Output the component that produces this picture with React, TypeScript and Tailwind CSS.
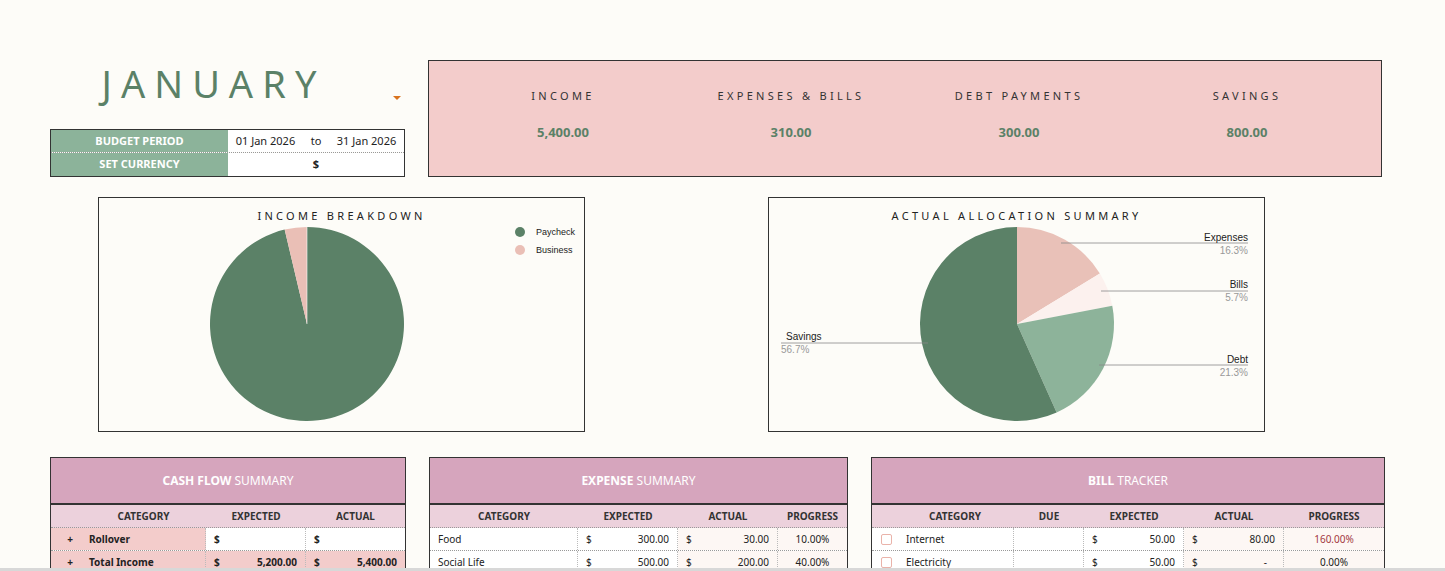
import React from 'react';

const GREEN = '#5b8167';
const PINK = '#eabfb6';

function slicePath(cx: number, cy: number, r: number, a0: number, a1: number) {
  const p = (a: number) => [cx + r * Math.sin(a * 2 * Math.PI), cy - r * Math.cos(a * 2 * Math.PI)];
  const [x0, y0] = p(a0);
  const [x1, y1] = p(a1);
  const large = a1 - a0 > 0.5 ? 1 : 0;
  return `M${cx},${cy} L${x0},${y0} A${r},${r} 0 ${large} 1 ${x1},${y1} Z`;
}

const summary = [
  { label: 'INCOME', value: '5,400.00' },
  { label: 'EXPENSES & BILLS', value: '310.00' },
  { label: 'DEBT PAYMENTS', value: '300.00' },
  { label: 'SAVINGS', value: '800.00' },
];

const alloc = [
  { v: 0.163, c: '#e9c1b8' },
  { v: 0.057, c: '#fcf1ee' },
  { v: 0.213, c: '#8db39a' },
  { v: 0.567, c: GREEN },
];

const th = 'text-[10px] font-bold text-[#333] text-center';
const cell = 'border-r border-dotted border-[#bbb] h-full flex items-center px-2';

function IncomeChart() {
  return (
    <div className="w-[487px] h-[235px] border border-[#333] bg-[#fdfcf8] relative shrink-0">
      <div className="text-center text-[11px] tracking-[0.3em] mt-[10px] font-['Liberation_Sans',sans-serif] text-[#222]">INCOME BREAKDOWN</div>
      <svg width="487" height="235" className="absolute inset-0">
        <path d={slicePath(208, 126, 97, 0, 0.963)} fill={GREEN} />
        <path d={slicePath(208, 126, 97, 0.963, 1)} fill={PINK} />
        <line x1="208" y1="29" x2="208" y2="126" stroke="#fff" strokeWidth="0.6" />
        <circle cx="421" cy="34" r="5" fill={GREEN} />
        <circle cx="421" cy="52" r="5" fill={PINK} />
        <text x="437" y="37" fontSize="9" fontFamily="Liberation Sans, sans-serif" fill="#222">Paycheck</text>
        <text x="437" y="55" fontSize="9" fontFamily="Liberation Sans, sans-serif" fill="#222">Business</text>
      </svg>
    </div>
  );
}

function AllocChart() {
  let acc = 0;
  const cx = 248, cy = 126;
  return (
    <div className="w-[497px] h-[235px] border border-[#333] bg-[#fdfcf8] relative shrink-0">
      <div className="text-center text-[11px] tracking-[0.3em] mt-[10px] font-['Liberation_Sans',sans-serif] text-[#222]">ACTUAL ALLOCATION SUMMARY</div>
      <svg width="497" height="235" className="absolute inset-0" fontFamily="Liberation Sans, sans-serif">
        {alloc.map((s, i) => {
          const d = slicePath(cx, cy, 97, acc, acc + s.v);
          acc += s.v;
          return <path key={i} d={d} fill={s.c} />;
        })}
        <g stroke="#888" strokeWidth="0.8">
          <line x1="292" y1="45" x2="479" y2="45" />
          <line x1="332" y1="93" x2="479" y2="93" />
          <line x1="330" y1="167" x2="479" y2="167" />
          <line x1="12" y1="145" x2="159" y2="145" />
        </g>
        <g fontSize="10">
          <text x="479" y="43" textAnchor="end" fill="#222">Expenses</text>
          <text x="479" y="56" textAnchor="end" fill="#999">16.3%</text>
          <text x="479" y="90" textAnchor="end" fill="#222">Bills</text>
          <text x="479" y="103" textAnchor="end" fill="#999">5.7%</text>
          <text x="479" y="165" textAnchor="end" fill="#222">Debt</text>
          <text x="479" y="178" textAnchor="end" fill="#999">21.3%</text>
          <text x="17" y="142" fill="#222">Savings</text>
          <text x="12" y="155" fill="#999">56.7%</text>
        </g>
      </svg>
    </div>
  );
}

function TableHead({ title, sub }: { title: React.ReactNode; sub: React.ReactNode }) {
  return (
    <>
      <div className="h-[47px] bg-[#d6a5bd] border-b-2 border-[#333] flex items-center justify-center text-white text-[12px]">{title}</div>
      <div className="h-[23px] bg-[#ecd1dc] flex items-center border-b border-dotted border-[#999]">{sub}</div>
    </>
  );
}

export default function App() {
  return (
    <div className="w-[1445px] h-[571px] bg-[#fdfcf8] overflow-hidden font-['Lato',sans-serif] relative">
      {/* top */}
      <div className="flex pt-[60px]">
        <div className="ml-[50px] w-[355px]">
          <div className="relative h-[69px]">
            <div className="text-center pr-[28px] pt-[1px] text-[38px] tracking-[0.24em] text-[#5b8167] font-['DejaVu_Serif',serif] leading-[44px]">JANUARY</div>
            <div className="absolute left-[343px] top-[36px] w-0 h-0 border-l-[4px] border-r-[4px] border-t-[4px] border-l-transparent border-r-transparent border-t-[#d9731e]" />
          </div>
          <div className="border border-[#333] text-[11px]">
            <div className="flex h-[23px] border-b border-dotted border-[#999]">
              <div className="w-[177px] bg-[#8cb39a] text-white font-bold flex items-center justify-center">BUDGET PERIOD</div>
              <div className="flex-1 bg-white flex items-center justify-around text-[#222]"><span>01 Jan 2026</span><span>to</span><span>31 Jan 2026</span></div>
            </div>
            <div className="flex h-[23px]">
              <div className="w-[177px] bg-[#8cb39a] text-white font-bold flex items-center justify-center">SET CURRENCY</div>
              <div className="flex-1 bg-white flex items-center justify-center font-bold text-[#222]">$</div>
            </div>
          </div>
        </div>
        <div className="ml-[23px] w-[954px] h-[117px] bg-[#f3cccb] border border-[#333] flex pt-[27px] pl-[20px] pr-[20px]">
          {summary.map((s) => (
            <div key={s.label} className="flex-1 text-center">
              <div className="text-[11px] tracking-[0.3em] text-[#333] font-['Liberation_Sans',sans-serif]">{s.label}</div>
              <div className="mt-[18px] text-[13px] font-bold text-[#5b8167]">{s.value}</div>
            </div>
          ))}
        </div>
      </div>

      {/* charts */}
      <div className="flex mt-[20px] ml-[98px] gap-[183px]">
        <IncomeChart />
        <AllocChart />
      </div>

      {/* tables */}
      <div className="flex mt-[25px] ml-[50px] gap-[23px] items-start">
        <div className="w-[356px] border border-[#333] border-b-0">
          <TableHead
            title={<span><b>CASH FLOW</b> SUMMARY</span>}
            sub={<>
              <div className={`${th} w-[155px] pl-[30px]`}>CATEGORY</div>
              <div className={`${th} w-[100px]`}>EXPECTED</div>
              <div className={`${th} flex-1`}>ACTUAL</div>
            </>}
          />
          {[['Rollover', '', ''], ['Total Income', '5,200.00', '5,400.00']].map((r, i) => (
            <div key={i} className="flex h-[23px] text-[10px] text-[#222] border-b border-dotted border-[#999]">
              <div className="w-[155px] bg-[#f3cccb] flex items-center font-bold border-r border-dotted border-[#bbb]">
                <span className="w-[38px] text-center">+</span>{r[0]}
              </div>
              <div className={`${cell} w-[100px] justify-between font-bold ${i ? 'bg-[#f3cccb]' : 'bg-white'}`}><span>$</span><span>{r[1]}</span></div>
              <div className={`flex-1 h-full flex items-center px-2 justify-between font-bold ${i ? 'bg-[#f3cccb]' : 'bg-white'}`}><span>$</span><span>{r[2]}</span></div>
            </div>
          ))}
        </div>

        <div className="w-[419px] border border-[#333] border-b-0">
          <TableHead
            title={<span><b>EXPENSE</b> SUMMARY</span>}
            sub={<>
              <div className={`${th} w-[148px]`}>CATEGORY</div>
              <div className={`${th} w-[100px]`}>EXPECTED</div>
              <div className={`${th} w-[100px]`}>ACTUAL</div>
              <div className={`${th} flex-1`}>PROGRESS</div>
            </>}
          />
          {[['Food', '300.00', '30.00', '10.00%'], ['Social Life', '500.00', '200.00', '40.00%']].map((r) => (
            <div key={r[0]} className="flex h-[23px] text-[10px] text-[#222] bg-white border-b border-dotted border-[#999]">
              <div className={`${cell} w-[148px]`}>{r[0]}</div>
              <div className={`${cell} w-[100px] justify-between`}><span>$</span><span>{r[1]}</span></div>
              <div className={`${cell} w-[100px] justify-between bg-[#fdf7f4]`}><span>$</span><span>{r[2]}</span></div>
              <div className="flex-1 flex items-center justify-center bg-[#fdf7f4]">{r[3]}</div>
            </div>
          ))}
        </div>

        <div className="w-[514px] border border-[#333] border-b-0">
          <TableHead
            title={<span><b>BILL</b> TRACKER</span>}
            sub={<>
              <div className={`${th} w-[142px] pl-[24px]`}>CATEGORY</div>
              <div className={`${th} w-[70px]`}>DUE</div>
              <div className={`${th} w-[100px]`}>EXPECTED</div>
              <div className={`${th} w-[100px]`}>ACTUAL</div>
              <div className={`${th} flex-1`}>PROGRESS</div>
            </>}
          />
          {[['Internet', '80.00', '160.00%'], ['Electricity', '-', '0.00%']].map((r, i) => (
            <div key={r[0]} className="flex h-[23px] text-[10px] text-[#222] bg-white border-b border-dotted border-[#999]">
              <div className={`${cell} w-[142px]`}>
                <span className="w-[11px] h-[11px] border border-[#eab3aa] rounded-[2px] mr-[14px] ml-[1px]" />{r[0]}
              </div>
              <div className={`${cell} w-[70px]`} />
              <div className={`${cell} w-[100px] justify-between`}><span>$</span><span>50.00</span></div>
              <div className={`${cell} w-[100px] justify-between bg-[#fdf7f4]`}><span>$</span><span className={r[1] === '-' ? 'pr-2' : ''}>{r[1]}</span></div>
              <div className={`flex-1 flex items-center justify-center bg-[#fdf7f4] ${i ? '' : 'text-[#a3373f]'}`}>{r[2]}</div>
            </div>
          ))}
        </div>
      </div>
      <div className="absolute left-0 right-0 bottom-0 h-[3px] bg-[#d8d8d8]" />
    </div>
  );
}
